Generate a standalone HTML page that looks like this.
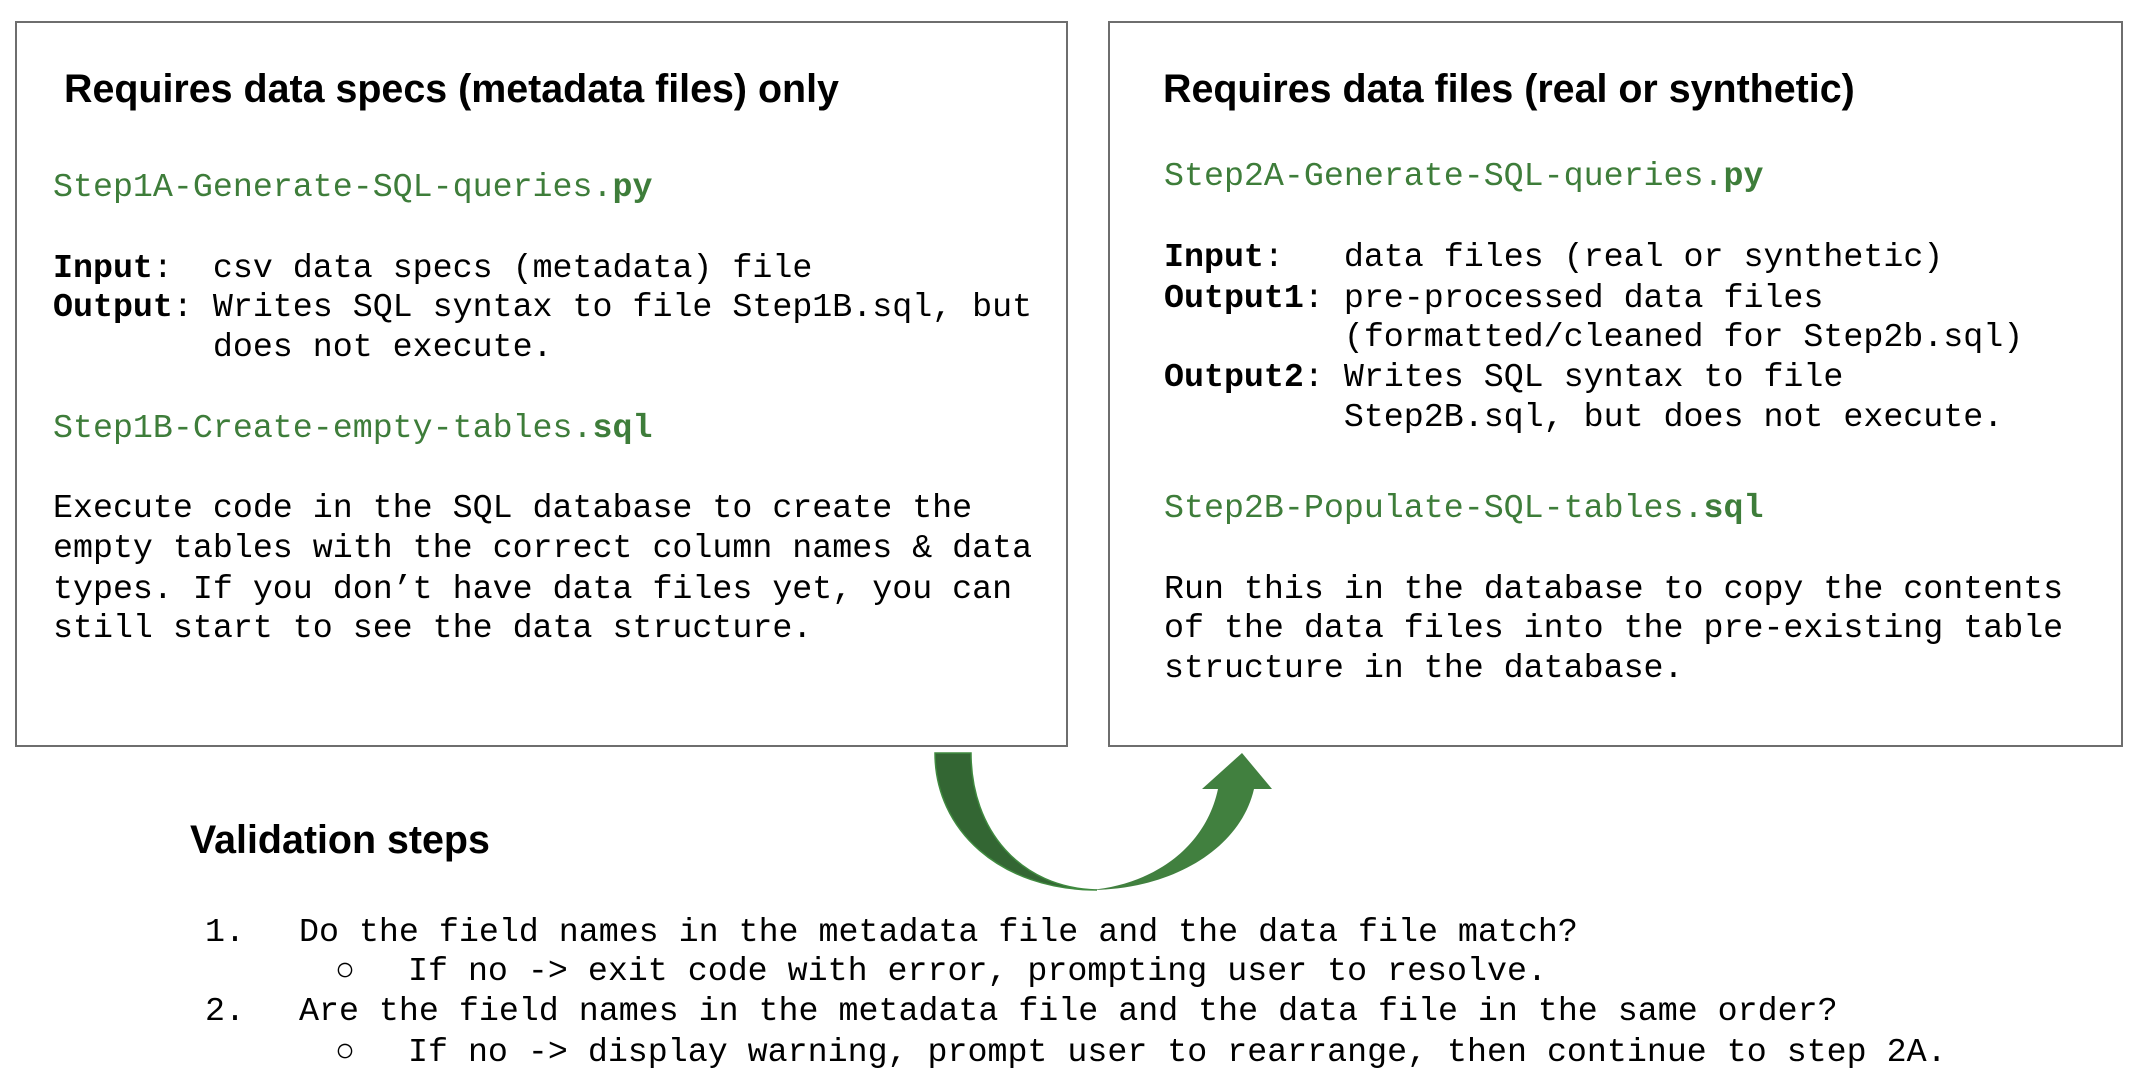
<!DOCTYPE html>
<html><head><meta charset="utf-8"><style>
html,body{margin:0;padding:0;background:#fff;}
body{width:2142px;height:1084px;position:relative;overflow:hidden;}
.box{position:absolute;border:2px solid #6e6e6e;box-sizing:border-box;background:#fff;}
.t{position:absolute;font-family:"Liberation Sans",Arial,sans-serif;font-weight:bold;font-size:39.4px;line-height:40px;white-space:pre;color:#000;}
.m{position:absolute;font-family:"Liberation Mono",monospace;font-size:33.3px;line-height:40px;white-space:pre;color:#000;}
.g{color:#3e7d3a;}
b{font-weight:bold;}
</style></head><body>
<div class="box" style="left:15px;top:21px;width:1053px;height:726px;"></div>
<div class="box" style="left:1108px;top:21px;width:1015px;height:726px;"></div>

<div class="t" style="left:64px;top:69px;">Requires data specs (metadata files) only</div>
<div class="m g" style="left:53px;top:167px;">Step1A-Generate-SQL-queries.<b>py</b></div>
<div class="m" style="left:53px;top:248px;"><b>Input</b>:  csv data specs (metadata) file</div>
<div class="m" style="left:53px;top:287px;"><b>Output</b>: Writes SQL syntax to file Step1B.sql, but</div>
<div class="m" style="left:53px;top:327px;">        does not execute.</div>
<div class="m g" style="left:53px;top:408px;">Step1B-Create-empty-tables.<b>sql</b></div>
<div class="m" style="left:53px;top:488px;">Execute code in the SQL database to create the</div>
<div class="m" style="left:53px;top:528px;">empty tables with the correct column names &amp; data</div>
<div class="m" style="left:53px;top:569px;">types. If you don’t have data files yet, you can</div>
<div class="m" style="left:53px;top:608px;">still start to see the data structure.</div>

<div class="t" style="left:1163px;top:69px;">Requires data files (real or synthetic)</div>
<div class="m g" style="left:1164px;top:156px;">Step2A-Generate-SQL-queries.<b>py</b></div>
<div class="m" style="left:1164px;top:237px;"><b>Input</b>:   data files (real or synthetic)</div>
<div class="m" style="left:1164px;top:278px;"><b>Output1</b>: pre-processed data files</div>
<div class="m" style="left:1164px;top:317px;">         (formatted/cleaned for Step2b.sql)</div>
<div class="m" style="left:1164px;top:357px;"><b>Output2</b>: Writes SQL syntax to file</div>
<div class="m" style="left:1164px;top:397px;">         Step2B.sql, but does not execute.</div>
<div class="m g" style="left:1164px;top:488px;">Step2B-Populate-SQL-tables.<b>sql</b></div>
<div class="m" style="left:1164px;top:569px;">Run this in the database to copy the contents</div>
<div class="m" style="left:1164px;top:608px;">of the data files into the pre-existing table</div>
<div class="m" style="left:1164px;top:648px;">structure in the database.</div>

<svg style="position:absolute;left:0;top:0" width="2142" height="1084">
<path d="M935,753 C935,830 1000,890 1097,890 C1020,888 971,830 971,753 Z" fill="#336633" stroke="#3f8a3f" stroke-width="1.5"/>
<path d="M1090,890 C1170,890 1240,850 1254,789 L1272,789 L1242,753 L1202,789 L1218,789 C1205,850 1150,885 1090,890 Z" fill="#41803f"/>
</svg>

<div class="t" style="left:190px;top:820px;">Validation steps</div>
<div class="m" style="left:205px;top:912px;">1.</div>
<div class="m" style="left:299px;top:912px;">Do the field names in the metadata file and the data file match?</div>
<div class="m" style="left:335px;top:951px;">○</div>
<div class="m" style="left:408px;top:951px;">If no -&gt; exit code with error, prompting user to resolve.</div>
<div class="m" style="left:205px;top:991px;">2.</div>
<div class="m" style="left:299px;top:991px;">Are the field names in the metadata file and the data file in the same order?</div>
<div class="m" style="left:335px;top:1032px;">○</div>
<div class="m" style="left:408px;top:1032px;">If no -&gt; display warning, prompt user to rearrange, then continue to step 2A.</div>
</body></html>
